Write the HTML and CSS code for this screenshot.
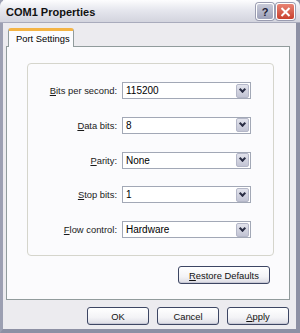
FILE: index.html
```html
<!DOCTYPE html>
<html lang="en">
<head>
    <meta charset="UTF-8">
    <title>COM1 Properties</title>
    <link rel="stylesheet" href="styles.css">
</head>
<body>

    <div class="window">
        <div class="titlebar">
            <div class="title">COM1 Properties</div>
            <div class="caption-buttons">
                <div class="cap-btn help">?</div>
                <div class="cap-btn close">
                    <svg width="11" height="10" viewBox="0 0 11 10">
                        <path d="M1.5 1 L9.5 9 M9.5 1 L1.5 9" stroke="#fff" stroke-width="2" fill="none"/>
                    </svg>
                </div>
            </div>
        </div>

        <div class="client">
            <div class="tabs">
                <div class="tab active">Port Settings</div>
            </div>
            <div class="panel">
                <div class="group">
                    <div class="row">
                        <label><u>B</u>its per second:</label>
                        <div class="combo"><span>115200</span><div class="arrow"></div></div>
                    </div>
                    <div class="row">
                        <label><u>D</u>ata bits:</label>
                        <div class="combo"><span>8</span><div class="arrow"></div></div>
                    </div>
                    <div class="row">
                        <label><u>P</u>arity:</label>
                        <div class="combo"><span>None</span><div class="arrow"></div></div>
                    </div>
                    <div class="row">
                        <label><u>S</u>top bits:</label>
                        <div class="combo"><span>1</span><div class="arrow"></div></div>
                    </div>
                    <div class="row">
                        <label><u>F</u>low control:</label>
                        <div class="combo"><span>Hardware</span><div class="arrow"></div></div>
                    </div>
                </div>
                <div class="restore-row">
                    <button class="btn restore"><u>R</u>estore Defaults</button>
                </div>
            </div>

            <div class="footer">
                <button class="btn">OK</button>
                <button class="btn">Cancel</button>
                <button class="btn"><u>A</u>pply</button>
            </div>
        </div>
    </div>

</body>
</html>
```

FILE: styles.css
```css
body {
    margin: 0;
    font-family: "Liberation Sans", Arial, sans-serif;
    font-size: 9.4px;
    color: #000;
    background: #d8d9e2;
}

.window {
    width: 300px;
    height: 333px;
    box-sizing: border-box;
    background: #ecebef;
    border-left: 3px solid #9c9fb2;
    border-right: 4px solid #8d90a4;
    border-bottom: 4px solid #8d90a4;
    display: flex;
    flex-direction: column;
}

/* заголовок окна */
.titlebar {
    height: 22px;
    margin-left: -3px;
    margin-right: -4px;
    padding: 0 5px 0 6px;
    display: flex;
    align-items: center;
    justify-content: space-between;
    background: linear-gradient(#fdfdfe, #e6e7ee 45%, #d3d4de);
    border-bottom: 1px solid #a9abbc;
    border-radius: 6px 6px 0 0;
}
.title {
    font-size: 11px;
    font-weight: bold;
    color: #111;
    padding-top: 2px;
}
.caption-buttons {
    display: flex;
    gap: 2px;
    margin-top: 1px;
}
.cap-btn {
    width: 16px;
    height: 15px;
    border: 1px solid #fff;
    border-radius: 3px;
    display: flex;
    align-items: center;
    justify-content: center;
    box-shadow: 0 0 0 1px #9a9cb0;
}
.help {
    background: linear-gradient(#c8cad8, #9ea2ba);
    color: #1e2238;
    font-weight: bold;
    font-size: 11px;
}
.close {
    width: 17px;
    background: linear-gradient(#e88474, #c9402e);
}

.client {
    flex: 1;
    padding: 5px 6px 0 3px;
    display: flex;
    flex-direction: column;
}

/* вкладки */
.tabs {
    display: flex;
    padding-left: 2px;
    height: 18px;
}
.tab {
    width: 66px;
    box-sizing: border-box;
    height: 19px;
    padding: 2px 0 0 7px;
    background: #fcfcfe;
    border: 1px solid #919b9c;
    border-bottom: none;
    border-top: 3px solid #f4b445;
    border-radius: 3px 3px 0 0;
    position: relative;
    z-index: 1;
}

.panel {
    height: 254px;
    box-sizing: border-box;
    background: #fbfbfd;
    border: 1px solid #919b9c;
    padding: 16px 0 0 20px;
}
.group {
    width: 247px;
    height: 193px;
    box-sizing: border-box;
    border: 1px solid #d5d5cc;
    border-radius: 4px;
    padding-top: 18px;
    display: flex;
    flex-direction: column;
    gap: 17.75px;
}
.row {
    display: flex;
    align-items: center;
    height: 17px;
}
.row label {
    width: 89px;
    text-align: right;
    margin-right: 5px;
    color: #1a1a1a;
}
.combo {
    width: 129px;
    height: 17px;
    box-sizing: border-box;
    border: 1px solid #a2a8b6;
    background: #fff;
    display: flex;
    align-items: center;
    justify-content: space-between;
    padding: 1px 1px 1px 3px;
}
.combo span {
    font-size: 10px;
}
.arrow {
    width: 13px;
    height: 14px;
    box-sizing: border-box;
    background: linear-gradient(#e2e3ec, #c2c4d4);
    border: 1px solid #b4b7c8;
    border-radius: 2px;
    position: relative;
}
.arrow::after {
    content: "";
    position: absolute;
    left: 3px;
    top: 2px;
    width: 3px;
    height: 3px;
    border-right: 2px solid #2a2e44;
    border-bottom: 2px solid #2a2e44;
    transform: rotate(45deg);
}

.restore-row {
    display: flex;
    justify-content: flex-end;
    padding-right: 19px;
    margin-top: 10px;
}

.btn {
    font-family: inherit;
    font-size: 9.4px;
    height: 18px;
    width: 62px;
    padding: 0;
    color: #111;
    border: 1px solid #3d4663;
    border-radius: 3px;
    background: linear-gradient(#ffffff, #f3f3f6 60%, #dcdce4);
    box-shadow: inset 0 -1px 0 #c8c9d6;
}
.restore {
    width: 92px;
}

.footer {
    display: flex;
    justify-content: flex-end;
    gap: 8px;
    margin-top: 7px;
    padding-right: 1px;
}
```
